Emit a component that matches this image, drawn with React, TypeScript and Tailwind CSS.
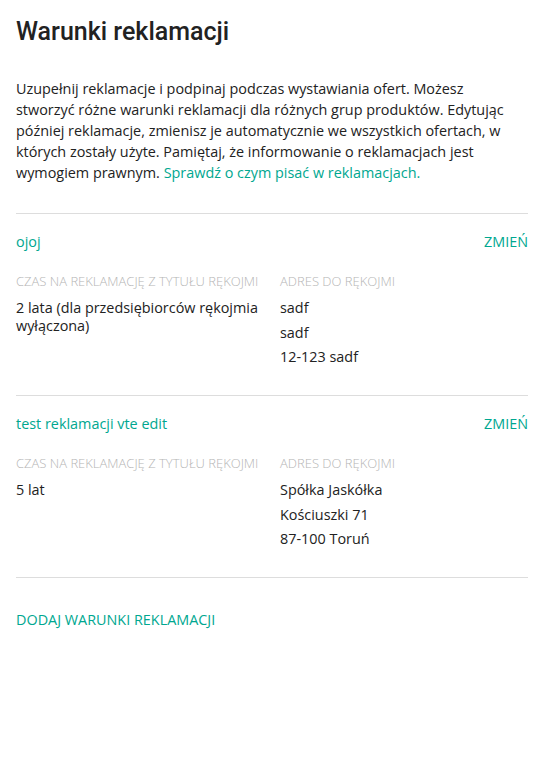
const items = [
  {
    name: "ojoj",
    time: "2 lata (dla przedsiębiorców rękojmia wyłączona)",
    address: ["sadf", "sadf", "12-123 sadf"],
  },
  {
    name: "test reklamacji vte edit",
    time: "5 lat",
    address: ["Spółka Jaskółka", "Kościuszki 71", "87-100 Toruń"],
  },
];

function WarrantyItem({ item }: { item: (typeof items)[number] }) {
  return (
    <div className="border-t border-[#dddddd] pt-[17px] pb-[29px]">
      <div className="flex items-center justify-between leading-[21px]">
        <a className="text-[#00a790] text-[14.4px]" href="#">
          {item.name}
        </a>
        <button className="text-[#00a790] text-[14.4px] uppercase">Zmień</button>
      </div>
      <div className="mt-[20px] grid grid-cols-2 gap-x-4">
        <div>
          <div className="text-[13px] font-light uppercase text-[#b5b5b5] leading-[18px]">
            Czas na reklamację z tytułu rękojmi
          </div>
          <div className="mt-[9px] text-[14.4px] text-[#222] leading-[18px]">{item.time}</div>
        </div>
        <div>
          <div className="text-[13px] font-light uppercase text-[#b5b5b5] leading-[18px]">
            Adres do rękojmi
          </div>
          <div className="mt-[9px] flex flex-col gap-[6.5px] text-[14.4px] text-[#222] leading-[18px]">
            {item.address.map((line, i) => (
              <div key={i}>{line}</div>
            ))}
          </div>
        </div>
      </div>
    </div>
  );
}

export default function App() {
  return (
    <div className="min-h-screen bg-white px-4 pt-4 font-['Open_Sans',sans-serif] text-[#222]">
      <h1 className="font-['Roboto',sans-serif] text-[25px] font-medium leading-[32px] text-[#222]">
        Warunki reklamacji
      </h1>
      <p className="mt-[30px] pr-[6px] text-[14.4px] leading-[21px] text-[#222]">
        Uzupełnij reklamacje i podpinaj podczas wystawiania ofert. Możesz stworzyć różne warunki
        reklamacji dla różnych grup produktów. Edytując później reklamacje, zmienisz je automatycznie
        we wszystkich ofertach, w których zostały użyte. Pamiętaj, że informowanie o reklamacjach jest
        wymogiem prawnym.{" "}
        <a href="#" className="text-[#00a790]">
          Sprawdź o czym pisać w reklamacjach.
        </a>
      </p>
      <div className="mt-[30px]">
        {items.map((item) => (
          <WarrantyItem key={item.name} item={item} />
        ))}
        <div className="border-t border-[#dddddd] pt-[29px]">
          <button className="text-[14.4px] uppercase text-[#00a790] leading-[21px]">
            Dodaj warunki reklamacji
          </button>
        </div>
      </div>
    </div>
  );
}
